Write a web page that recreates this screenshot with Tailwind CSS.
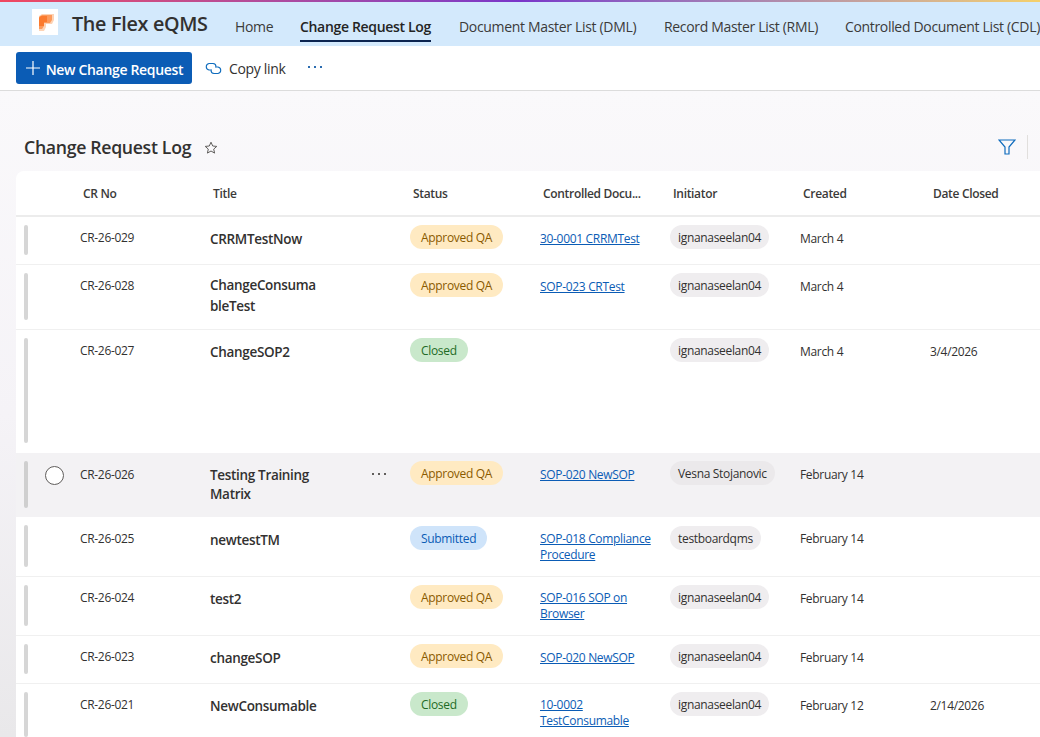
<!DOCTYPE html>
<html lang="en">
<head>
  <meta charset="UTF-8" />
  <title>Change Request Log</title>
  <script src="https://cdn.jsdelivr.net/npm/@tailwindcss/browser@4"></script>
</head>
<body class="w-[1040px] h-[737px] overflow-hidden bg-white font-['Open_Sans','Noto_Sans',sans-serif] text-[#323130] tracking-[-0.02em]">
  <div class="h-[2px] bg-gradient-to-r from-[#f0475f] via-[#7a35c9] to-[#f5d06a]"></div>

  <!-- Nav -->
  <div class="h-[44px] bg-[#d3e9fc] flex items-center whitespace-nowrap overflow-hidden">
    <div class="ml-[32px] w-[26px] h-[26px] mb-[4px] bg-white shrink-0">
      <svg width="26" height="26" viewBox="0 0 26 26">
        <path d="M7 7 10 5h12v6l-2 4h-6v3l-2 4H7z" fill="#fdd3b5"/>
        <path d="M7 8 10 6h10v5l-2 3h-6v3l-2 3H7z" fill="#fc9a5c"/>
        <path d="M7 9 9 7h6v6h-3v4H7z" fill="#fb7a2e"/>
      </svg>
    </div>
    <div class="ml-[14px] w-[163px] text-[19.8px] font-semibold text-[#323130]">The Flex eQMS</div>
    <a class="w-[65px] pt-[4px] text-[14px] text-[#3b3a39]">Home</a>
    <a class="relative w-[159px] pt-[4px] text-[14px] font-semibold text-[#242424]">Change Request Log<span class="absolute left-0 top-[28px] w-[131px] h-[2px] bg-[#0b2350]"></span></a>
    <a class="w-[205px] pt-[4px] text-[14px] text-[#3b3a39]">Document Master List (DML)</a>
    <a class="w-[181px] pt-[4px] text-[14px] text-[#3b3a39]">Record Master List (RML)</a>
    <a class="pt-[4px] text-[14px] text-[#3b3a39]">Controlled Document List (CDL)</a>
  </div>

  <!-- Command bar -->
  <div class="h-[45px] bg-white border-b border-[#dcdcdc] flex items-center pl-[16px]">
    <button class="h-[32px] w-[176px] rounded-[3px] bg-[#0b5cb5] text-white text-[14px] font-semibold flex items-center justify-center gap-[5px] whitespace-nowrap">
      <svg width="16" height="16" viewBox="0 0 16 16" fill="none" stroke="white" stroke-width="1.2"><path d="M8 1v14M1 8h14"/></svg>
      <span class="pt-[2px]">New Change Request</span>
    </button>
    <svg class="ml-[13px]" width="17" height="13" viewBox="0 0 17 13" fill="none" stroke="#0f6cbd" stroke-width="1.1"><path d="M7 8H4a3.300 3.300 0 0 1 0-6.500h4a3.300 3.300 0 0 1 3 3.300"/><path d="M10 5h3a3.300 3.300 0 0 1 0 6.500H9a3.300 3.300 0 0 1-3-3.300"/></svg>
    <span class="ml-[7px] pt-[1px] text-[14px] text-[#323130]">Copy link</span>
    <div class="ml-[22px] mb-[3px] flex gap-[4px]">
      <span class="w-[2px] h-[2px] bg-[#2b6cb0]"></span>
      <span class="w-[2px] h-[2px] bg-[#2b6cb0]"></span>
      <span class="w-[2px] h-[2px] bg-[#2b6cb0]"></span>
    </div>
  </div>

  <!-- Page -->
  <div class="bg-gradient-to-b from-[#faf9fb] via-[#f5f3f7] to-[#e9e8ea] pl-[16px] h-[646px] overflow-hidden">
    <div class="h-[80px] pt-[42px] pl-[8px] flex items-start">
      <h1 class="text-[17.7px] font-semibold text-[#323130] leading-[28px]">Change Request Log</h1>
      <svg class="ml-[13px] mt-[8px]" width="14" height="14" viewBox="0 0 14 14" fill="none" stroke="#605e5c" stroke-width="1"><path d="M7 1.200 8.700 5l4.100.4-3.100 2.700.9 4L7 10l-3.600 2.100.9-4L1.200 5.400 5.300 5z"/></svg>
      <svg class="ml-auto mr-[11px] mt-[6px]" width="18" height="16" viewBox="0 0 18 16" fill="none" stroke="#0f6cbd" stroke-width="1.200"><path d="M1 1h16l-6 7v7H7V8z"/></svg>
      <div class="w-px h-[24px] mt-[2px] mr-[12px] bg-[#e1dfdd]"></div>
    </div>

    <div class="bg-white rounded-tl-[8px] text-[12px]">
      <!-- Header -->
      <div class="h-[46px] border-b-2 border-[#ececec] grid grid-cols-[67px_130px_200px_130px_130px_130px_130px_120px] items-center font-semibold text-[#3b3a39] whitespace-nowrap pt-[1px]">
        <div></div>
        <div>CR No</div>
        <div>Title</div>
        <div>Status</div>
        <div>Controlled Docu...</div>
        <div>Initiator</div>
        <div>Created</div>
        <div>Date Closed</div>
      </div>

      <!-- Rows -->
      <div class="h-[48px] border-b border-[#f0f0f0] grid grid-cols-[8px_56px_130px_200px_130px_130px_130px_130px_110px]">
        <div class="ml-[8px] mt-[8px] w-[4px] h-[30px] rounded bg-[#d6d6d6]"></div><div></div>
        <div class="pt-[12px]">CR-26-029</div>
        <div class="pt-[12px] text-[13.5px] font-semibold">CRRMTestNow</div>
        <div class="pt-[8px]"><span class="inline-block h-[24px] leading-[26px] px-[11px] rounded-full bg-[#ffeac2] text-[#8a5a00]">Approved QA</span></div>
        <div class="pt-[13px]"><a class="underline text-[#0b5cb5]">30-0001 CRRMTest</a></div>
        <div class="pt-[8px]"><span class="inline-block h-[24px] leading-[26px] px-[8px] rounded-full bg-[#efedef]">ignanaseelan04</span></div>
        <div class="pt-[13px]">March 4</div>
        <div></div>
      </div>

      <div class="h-[65px] border-b border-[#f0f0f0] grid grid-cols-[8px_56px_130px_200px_130px_130px_130px_130px_110px]">
        <div class="ml-[8px] mt-[8px] w-[4px] h-[47px] rounded bg-[#d6d6d6]"></div><div></div>
        <div class="pt-[12px]">CR-26-028</div>
        <div class="pt-[10px] text-[13.5px] font-semibold leading-[21px] w-[112px] break-all">ChangeConsumableTest</div>
        <div class="pt-[8px]"><span class="inline-block h-[24px] leading-[26px] px-[11px] rounded-full bg-[#ffeac2] text-[#8a5a00]">Approved QA</span></div>
        <div class="pt-[13px]"><a class="underline text-[#0b5cb5]">SOP-023 CRTest</a></div>
        <div class="pt-[8px]"><span class="inline-block h-[24px] leading-[26px] px-[8px] rounded-full bg-[#efedef]">ignanaseelan04</span></div>
        <div class="pt-[13px]">March 4</div>
        <div></div>
      </div>

      <div class="h-[123px] grid grid-cols-[8px_56px_130px_200px_130px_130px_130px_130px_110px]">
        <div class="ml-[8px] mt-[8px] w-[4px] h-[105px] rounded bg-[#d6d6d6]"></div><div></div>
        <div class="pt-[12px]">CR-26-027</div>
        <div class="pt-[12px] text-[13.5px] font-semibold">ChangeSOP2</div>
        <div class="pt-[8px]"><span class="inline-block h-[24px] leading-[26px] px-[11px] rounded-full bg-[#c9e8cb] text-[#1f6b26]">Closed</span></div>
        <div></div>
        <div class="pt-[8px]"><span class="inline-block h-[24px] leading-[26px] px-[8px] rounded-full bg-[#efedef]">ignanaseelan04</span></div>
        <div class="pt-[13px]">March 4</div>
        <div class="pt-[13px]">3/4/2026</div>
      </div>

      <div class="relative h-[64px] bg-[#f3f2f4] grid grid-cols-[8px_56px_130px_200px_130px_130px_130px_130px_110px]">
        <div class="ml-[8px] mt-[8px] w-[4px] h-[47px] rounded bg-[#cfcfcf]"></div>
        <div class="pl-[21px] pt-[13px]"><div class="w-[19px] h-[19px] rounded-full border border-[#605e5c] bg-white"></div></div>
        <div class="pt-[13px]">CR-26-026</div>
        <div class="pt-[13px] text-[13.5px] font-semibold leading-[19px] w-[130px]">Testing Training Matrix</div>
        <div class="pt-[8px]"><span class="inline-block h-[24px] leading-[26px] px-[11px] rounded-full bg-[#ffeac2] text-[#8a5a00]">Approved QA</span></div>
        <div class="pt-[13px]"><a class="underline text-[#0b5cb5]">SOP-020 NewSOP</a></div>
        <div class="pt-[8px]"><span class="inline-block h-[24px] leading-[26px] px-[8px] rounded-full bg-[#ebe9eb]">Vesna Stojanovic</span></div>
        <div class="pt-[13px]">February 14</div>
        <div></div>
        <span class="absolute left-[356px] top-[20px] flex gap-[4px]"><i class="w-[2px] h-[2px] bg-[#605e5c]"></i><i class="w-[2px] h-[2px] bg-[#605e5c]"></i><i class="w-[2px] h-[2px] bg-[#605e5c]"></i></span>
      </div>

      <div class="h-[60px] border-b border-[#f0f0f0] grid grid-cols-[8px_56px_130px_200px_130px_130px_130px_130px_110px]">
        <div class="ml-[8px] mt-[8px] w-[4px] h-[42px] rounded bg-[#d6d6d6]"></div><div></div>
        <div class="pt-[13px]">CR-26-025</div>
        <div class="pt-[13px] text-[13.5px] font-semibold">newtestTM</div>
        <div class="pt-[9px]"><span class="inline-block h-[24px] leading-[25px] px-[11px] rounded-full bg-[#cfe4fa] text-[#0b5cb5]">Submitted</span></div>
        <div class="pt-[14px] leading-[16px] pr-[10px]"><a class="underline text-[#0b5cb5]">SOP-018 Compliance Procedure</a></div>
        <div class="pt-[9px]"><span class="inline-block h-[24px] leading-[25px] px-[8px] rounded-full bg-[#efedef]">testboardqms</span></div>
        <div class="pt-[13px]">February 14</div>
        <div></div>
      </div>

      <div class="h-[59px] border-b border-[#f0f0f0] grid grid-cols-[8px_56px_130px_200px_130px_130px_130px_130px_110px]">
        <div class="ml-[8px] mt-[8px] w-[4px] h-[41px] rounded bg-[#d6d6d6]"></div><div></div>
        <div class="pt-[12px]">CR-26-024</div>
        <div class="pt-[12px] text-[13.5px] font-semibold">test2</div>
        <div class="pt-[8px]"><span class="inline-block h-[24px] leading-[26px] px-[11px] rounded-full bg-[#ffeac2] text-[#8a5a00]">Approved QA</span></div>
        <div class="pt-[13px] leading-[16px] pr-[20px]"><a class="underline text-[#0b5cb5]">SOP-016 SOP on Browser</a></div>
        <div class="pt-[8px]"><span class="inline-block h-[24px] leading-[26px] px-[8px] rounded-full bg-[#efedef]">ignanaseelan04</span></div>
        <div class="pt-[13px]">February 14</div>
        <div></div>
      </div>

      <div class="h-[48px] border-b border-[#f0f0f0] grid grid-cols-[8px_56px_130px_200px_130px_130px_130px_130px_110px]">
        <div class="ml-[8px] mt-[8px] w-[4px] h-[30px] rounded bg-[#d6d6d6]"></div><div></div>
        <div class="pt-[12px]">CR-26-023</div>
        <div class="pt-[12px] text-[13.5px] font-semibold">changeSOP</div>
        <div class="pt-[8px]"><span class="inline-block h-[24px] leading-[26px] px-[11px] rounded-full bg-[#ffeac2] text-[#8a5a00]">Approved QA</span></div>
        <div class="pt-[13px]"><a class="underline text-[#0b5cb5]">SOP-020 NewSOP</a></div>
        <div class="pt-[8px]"><span class="inline-block h-[24px] leading-[26px] px-[8px] rounded-full bg-[#efedef]">ignanaseelan04</span></div>
        <div class="pt-[13px]">February 14</div>
        <div></div>
      </div>

      <div class="h-[60px] grid grid-cols-[8px_56px_130px_200px_130px_130px_130px_130px_110px]">
        <div class="ml-[8px] mt-[8px] w-[4px] h-[45px] rounded bg-[#d6d6d6]"></div><div></div>
        <div class="pt-[12px]">CR-26-021</div>
        <div class="pt-[12px] text-[13.5px] font-semibold">NewConsumable</div>
        <div class="pt-[8px]"><span class="inline-block h-[24px] leading-[26px] px-[11px] rounded-full bg-[#c9e8cb] text-[#1f6b26]">Closed</span></div>
        <div class="pt-[13px] leading-[16px] pr-[30px]"><a class="underline text-[#0b5cb5]">10-0002 TestConsumable</a></div>
        <div class="pt-[8px]"><span class="inline-block h-[24px] leading-[26px] px-[8px] rounded-full bg-[#efedef]">ignanaseelan04</span></div>
        <div class="pt-[13px]">February 12</div>
        <div class="pt-[13px]">2/14/2026</div>
      </div>
    </div>
  </div>
</body>
</html>
